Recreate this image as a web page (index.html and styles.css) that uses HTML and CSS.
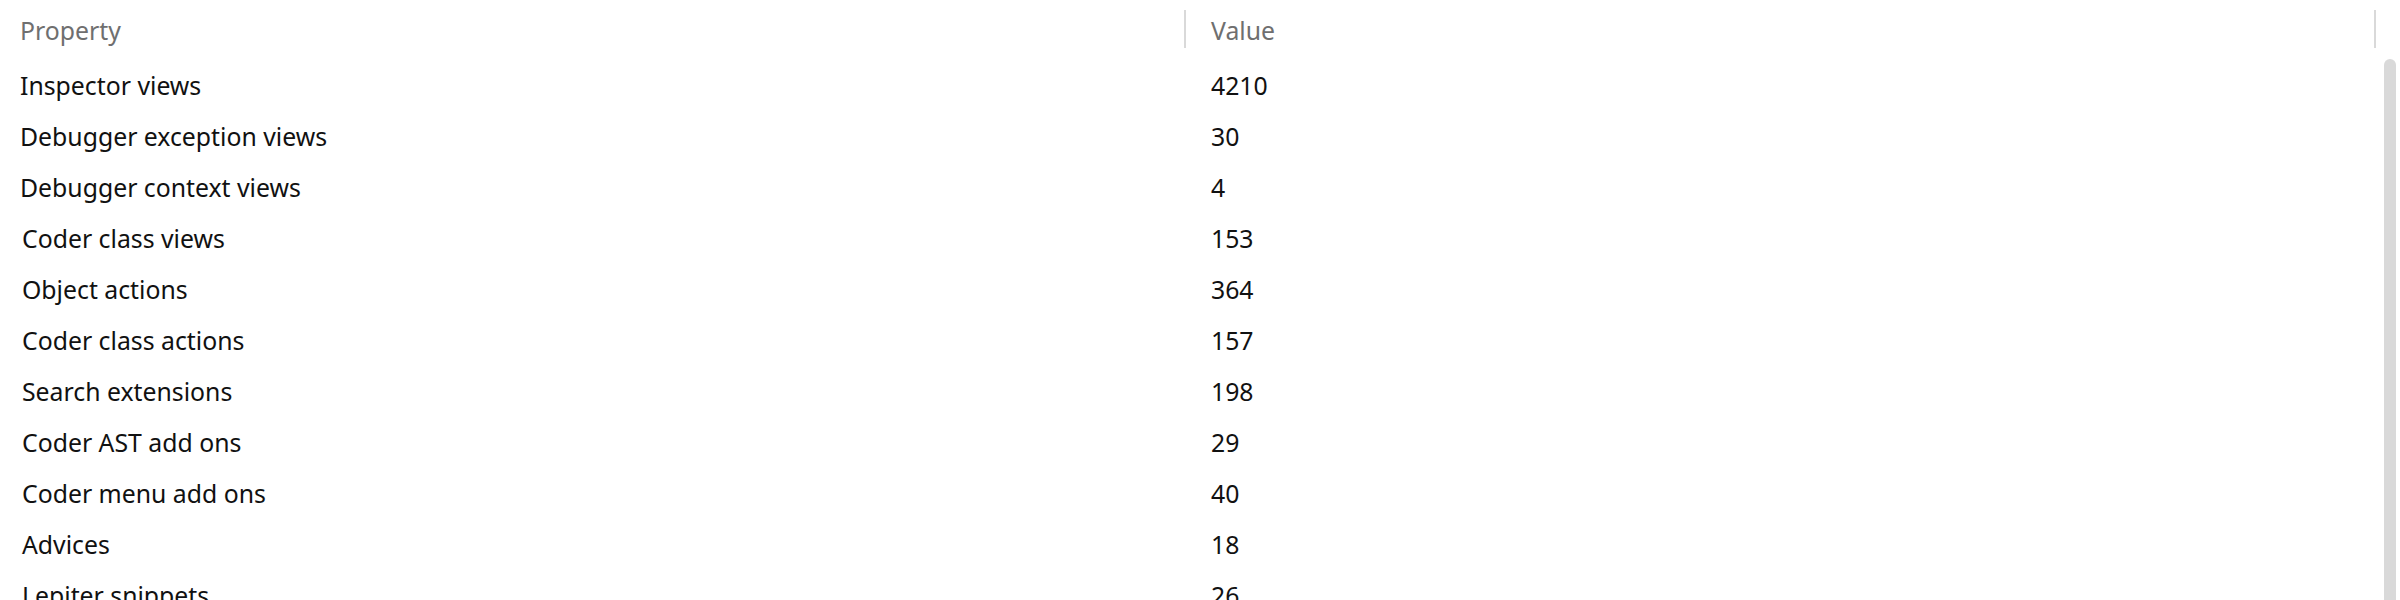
FILE: index.html
```html
<!DOCTYPE html>
<html>
<head>
<meta charset="utf-8">
<link rel="stylesheet" href="styles.css">
</head>
<body>
<div class="view">
  <div class="table">
    <div class="header">
      <div class="hcell hprop">Property</div>
      <div class="divider"></div>
      <div class="hcell hval">Value</div>
      <div class="divider"></div>
    </div>
    <div class="rows">
      <div class="row"><div class="prop">Inspector views</div><div class="val">4210</div></div>
      <div class="row"><div class="prop">Debugger exception views</div><div class="val">30</div></div>
      <div class="row"><div class="prop">Debugger context views</div><div class="val">4</div></div>
      <div class="row"><div class="prop prop-ext">Coder class views</div><div class="val">153</div></div>
      <div class="row"><div class="prop prop-ext">Object actions</div><div class="val">364</div></div>
      <div class="row"><div class="prop prop-ext">Coder class actions</div><div class="val">157</div></div>
      <div class="row"><div class="prop prop-ext">Search extensions</div><div class="val">198</div></div>
      <div class="row"><div class="prop prop-ext">Coder AST add ons</div><div class="val">29</div></div>
      <div class="row"><div class="prop prop-ext">Coder menu add ons</div><div class="val">40</div></div>
      <div class="row"><div class="prop prop-ext">Advices</div><div class="val">18</div></div>
      <div class="row"><div class="prop prop-ext">Lepiter snippets</div><div class="val">26</div></div>
    </div>
  </div>
  <div class="scrollbar"><div class="thumb"></div></div>
</div>
</body>
</html>
```
FILE: styles.css
```css
html, body {
  margin: 0;
  padding: 0;
  background: #ffffff;
}

body {
  font-family: "Noto Sans", "Open Sans", sans-serif;
  font-size: 24.8px;
  color: #111111;
  height: 600px;
  overflow: hidden;
}

.view {
  display: flex;
  height: 600px;
  overflow: hidden;
}

.table {
  width: 2376px;
  flex: none;
}

.header {
  display: flex;
  align-items: flex-start;
  height: 60px;
}

.hcell {
  line-height: 51px;
  padding-top: 5px;
  color: #6f6f6f;
  white-space: nowrap;
}

.hprop {
  width: 1164px;
  padding-left: 20px;
}

.hval {
  flex: 1;
  padding-left: 25px;
}

.divider {
  width: 2px;
  height: 38px;
  margin-top: 10px;
  background: #d9d9d9;
  flex: none;
}

.row {
  display: grid;
  grid-template-columns: 1186px 1fr;
  height: 51px;
  line-height: 51px;
  white-space: nowrap;
}

.prop {
  padding-left: 20px;
}

.prop-ext {
  padding-left: 22px;
}

.val {
  padding-left: 25px;
}

.scrollbar {
  flex: 1;
  padding-top: 59px;
  padding-left: 8px;
  padding-right: 4px;
}

.thumb {
  width: 12px;
  height: 620px;
  border-radius: 6px;
  background: #d9d9d9;
}
```
